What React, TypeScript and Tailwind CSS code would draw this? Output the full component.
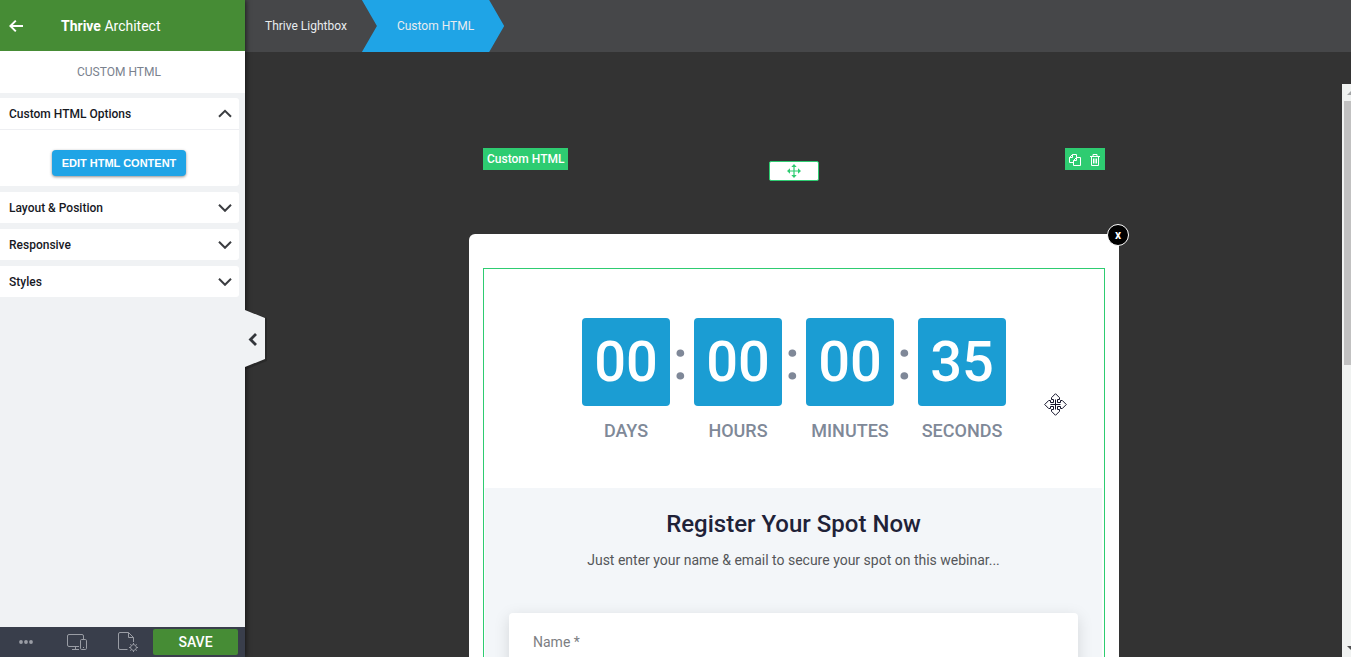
import { Fragment } from "react";

const countdown = [
  { label: "DAYS", value: "00" },
  { label: "HOURS", value: "00" },
  { label: "MINUTES", value: "00" },
  { label: "SECONDS", value: "35" },
];

const closedPanels = ["Layout & Position", "Responsive", "Styles"];

function Chevron({ up = false }: { up?: boolean }) {
  return (
    <svg width="14" height="9" viewBox="0 0 14 9" fill="none" stroke="#3b3d41" strokeWidth="2" aria-hidden="true">
      <path d={up ? "M1 7.8 L7 1.8 L13 7.8" : "M1 1.8 L7 7.8 L13 1.8"} />
    </svg>
  );
}

function PanelHeader({ title, open = false }: { title: string; open?: boolean }) {
  return (
    <button
      type="button"
      aria-expanded={open}
      className="flex h-[31px] w-full items-center justify-between pr-[7px] pl-[9px] text-left text-[12px] leading-4 font-medium text-[#17191f]"
    >
      {title}
      <Chevron up={open} />
    </button>
  );
}

function Sidebar() {
  return (
    <aside className="relative z-10 flex w-[245px] shrink-0 flex-col bg-[#f0f2f4] shadow-[1px_0_5px_rgba(0,0,0,0.6)]">
      <header className="flex h-[51px] shrink-0 items-center bg-[#468c35] px-[9px] text-white">
        <button type="button" aria-label="Back" className="w-[52px]">
          <svg width="14" height="14" viewBox="0 0 14 14" fill="none" stroke="currentColor" strokeWidth="2" aria-hidden="true">
            <path d="M14 7 H1.6 M6.8 1.6 L1.4 7 L6.8 12.4" />
          </svg>
        </button>
        <h1 className="text-[14px] leading-5">
          <b className="font-bold">Thrive</b> Architect
        </h1>
      </header>

      <h2 className="flex h-[42px] shrink-0 items-center justify-center bg-white pr-[7px] text-[12px] leading-4 text-[#7a828e]">
        CUSTOM HTML
      </h2>

      <div className="flex grow flex-col gap-[6px] pt-[5px] pr-[6px]">
        <section className="rounded-r-[3px] bg-white">
          <div className="border-b border-[#eeeff2]">
            <PanelHeader title="Custom HTML Options" open />
          </div>
          <div className="flex h-14 justify-center pt-5 pr-px">
            <button
              type="button"
              className="h-[26px] w-[134px] rounded-[4px] bg-[#1fa4e6] font-['Liberation_Sans',sans-serif] text-[11px] leading-4 font-bold whitespace-nowrap text-white shadow-[0_1px_3px_rgba(0,0,0,0.45)]"
            >
              EDIT HTML CONTENT
            </button>
          </div>
        </section>
        {closedPanels.map((title) => (
          <section key={title} className="rounded-r-[3px] bg-white">
            <PanelHeader title={title} />
          </section>
        ))}
      </div>

      <footer className="flex h-[30px] shrink-0 items-center bg-[#393e4b] text-[#9a9da5]">
        <button type="button" aria-label="More" className="flex w-[51px] justify-center">
          <svg width="14" height="4" viewBox="0 0 14 4" fill="currentColor" aria-hidden="true">
            <circle cx="2" cy="2" r="1.9" />
            <circle cx="7" cy="2" r="1.9" />
            <circle cx="12" cy="2" r="1.9" />
          </svg>
        </button>
        <button type="button" aria-label="Device preview" className="flex w-[51px] justify-center">
          <svg width="20" height="17" viewBox="0 0 20 17" fill="none" stroke="currentColor" aria-hidden="true">
            <path d="M12 12.5 H2 A1.5 1.5 0 0 1 .5 11 V2 A1.5 1.5 0 0 1 2 .5 H15 A1.5 1.5 0 0 1 16.500 2 V5 M8.500 12.500 V15.500 M5 15.500 H12" />
            <rect x="13.500" y="5.500" width="6" height="10" rx="1.200" />
            <path d="M16 13.500 H17" />
          </svg>
        </button>
        <button type="button" aria-label="Page settings" className="flex w-[51px] justify-center">
          <svg width="20" height="20" viewBox="0 0 20 20" fill="none" stroke="currentColor" aria-hidden="true">
            <path d="M9.500 17.500 H2 A1.500 1.500 0 0 1 .5 16 V2 A1.500 1.500 0 0 1 2 .5 H10.500 L15.500 5.500 V10 M10.500 .5 V5.500 H15.500" />
            <circle cx="15.500" cy="15.500" r="2.900" />
            <path d="M15.500 11 V12.500 M15.500 18.500 V20 M11 15.500 H12.500 M18.500 15.500 H20 M12.300 12.300 L13.400 13.400 M17.600 17.600 L18.700 18.700 M12.300 18.700 L13.400 17.600 M17.600 13.400 L18.700 12.300" />
          </svg>
        </button>
        <button type="button" className="h-[26px] w-[85px] rounded-[2px] bg-[#468c35] pb-px text-[14px] leading-5 font-medium text-white">
          SAVE
        </button>
      </footer>

      <button type="button" aria-label="Collapse sidebar" className="absolute top-[310px] left-full">
        <svg width="24" height="60" viewBox="0 0 24 60" aria-hidden="true">
          <path d="M0 0 L22 8 V51 L0 60 Z" fill="#000" opacity=".18" />
          <path d="M0 0 L20 8 V49 L0 57 Z" fill="#f0f2f4" />
          <path d="M11 24 L5.500 29.500 L11 35" fill="none" stroke="#33363b" strokeWidth="2.800" />
        </svg>
      </button>
    </aside>
  );
}

function Breadcrumbs() {
  return (
    <nav aria-label="Breadcrumb" className="flex h-[52px] shrink-0 bg-[#464749] text-[12px] leading-4 text-[#e8ecef]">
      <a href="#lightbox" className="flex items-center pr-[15px] pl-5">
        Thrive Lightbox
      </a>
      <a
        href="#custom-html"
        className="flex items-center bg-[#1fa4e6] pr-[30px] pl-[35px] [clip-path:polygon(0_0,calc(100%-15px)_0,100%_50%,calc(100%-15px)_100%,0_100%,15px_50%)]"
      >
        Custom HTML
      </a>
    </nav>
  );
}

function ElementToolbar() {
  return (
    <div className="flex h-[33px] shrink-0 justify-between px-[14px]">
      <div className="flex flex-1 items-start">
        <span className="flex h-[22px] items-center bg-[#2ecc71] px-1 text-[12px] leading-4 font-medium text-white">
          Custom HTML
        </span>
      </div>
      <button
        type="button"
        aria-label="Move element"
        className="flex h-5 w-[50px] items-center justify-center self-end rounded-[2px] border border-[#2ecc71] bg-white"
      >
        <svg width="14" height="14" viewBox="0 0 14 14" fill="#2ecc71" aria-hidden="true">
          <path d="M6.400 2.500 V11.500 H7.600 V2.500 Z M2.500 6.400 V7.600 H11.500 V6.400 Z" />
          <path d="M7 0 L9.700 3 H4.300 Z M7 14 L9.700 11 H4.300 Z M0 7 L3 4.300 V9.700 Z M14 7 L11 4.300 V9.700 Z" />
        </svg>
      </button>
      <div className="flex flex-1 items-start justify-end">
        <div className="flex h-[22px] w-10 items-center justify-center gap-2 bg-[#2ecc71] pt-[2px] text-white">
          <button type="button" aria-label="Duplicate">
            <svg width="12" height="12" viewBox="0 0 12 12" fill="none" stroke="currentColor" aria-hidden="true">
              <path d="M4.500 8.500 H.5 V3.500 L3.500 .5 H7.500 V3 M3.500 .5 V3.500 H.5" />
              <path d="M4.500 11.500 V6.500 L7.500 3.500 H11.500 V11.500 Z M7.500 3.500 V6.500 H4.500" />
            </svg>
          </button>
          <button type="button" aria-label="Delete">
            <svg width="12" height="12" viewBox="0 0 12 12" fill="none" stroke="currentColor" aria-hidden="true">
              <path d="M1 2.500 H11 M4 2.500 V.5 H8 V2.500 M2.500 2.500 V11.500 H9.500 V2.500 M4.500 4.500 V9.500 M6 4.500 V9.500 M7.500 4.500 V9.500" />
            </svg>
          </button>
        </div>
      </div>
    </div>
  );
}

function MoveCursor() {
  return (
    <svg width="23" height="23" viewBox="0 0 23 23" fill="#fff" stroke="#14142a" aria-hidden="true" className="absolute top-[124px] right-[37px]">
      <path d="M11.500 .7 L15.500 4.700 V6.500 H13.500 V9.500 H16.500 V7.500 H18.300 L22.300 11.500 L18.300 15.500 H16.500 V13.500 H13.500 V16.500 H15.500 V18.300 L11.500 22.300 L7.500 18.300 V16.500 H9.500 V13.500 H6.500 V15.500 H4.700 L.7 11.500 L4.700 7.500 H6.500 V9.500 H9.500 V6.500 H7.500 V4.700 Z" />
      <path d="M11.500 6.500 V16.500 M6.500 11.500 H16.500" />
    </svg>
  );
}

function Countdown() {
  return (
    <div className="relative flex h-[219px] justify-center pt-[49px]">
      {countdown.map(({ label, value }, i) => (
        <Fragment key={label}>
          {i > 0 && (
            <div className="flex h-[88px] w-6 items-center justify-center pr-[3px] pb-1 text-[56px] leading-[60px] font-medium text-[#7f8898]">:</div>
          )}
          <div className="flex w-[88px] flex-col items-center">
            <div className="flex h-[88px] w-full items-center justify-center rounded-[4px] bg-[#1b9dd3] text-[56px] leading-[60px] font-medium text-white">
              {value}
            </div>
            <div className="mt-[13px] text-[18px] leading-6 font-medium text-[#7f8998]">{label}</div>
          </div>
        </Fragment>
      ))}
      <MoveCursor />
    </div>
  );
}

function Lightbox() {
  return (
    <div className="relative mt-[53px] grow rounded-t-[6px] bg-white px-[14px] pt-[34px]">
      <button
        type="button"
        aria-label="Close"
        className="absolute -top-[10px] -right-[10px] flex size-[22px] items-center justify-center rounded-full border border-white bg-black pb-px text-[12px] leading-4 font-bold text-white"
      >
        x
      </button>
      <div className="border border-[#2ecc71]">
        <Countdown />
        <form className="mr-[2px] ml-px bg-[#f3f6f9] px-6 pt-5 pb-10 text-center">
          <h3 className="text-[24px] leading-8 font-medium text-[#1f2238]">Register Your Spot Now</h3>
          <p className="mt-2 text-[14px] leading-6 text-[#555659]">
            Just enter your name &amp; email to secure your spot on this webinar...
          </p>
          <input
            type="text"
            aria-label="Name"
            placeholder="Name *"
            className="mt-[41px] h-[58px] w-full rounded-[4px] bg-white px-6 text-[14px] leading-5 shadow-[0_4px_16px_rgba(0,0,0,0.13)] outline-none placeholder:text-[#7c7e82]"
          />
        </form>
      </div>
    </div>
  );
}

function CanvasScrollbar() {
  return (
    <div aria-hidden="true" className="mt-8 flex w-[9px] shrink-0 flex-col overflow-hidden bg-[#f0f2f1] pl-[2px]">
      <svg width="7" height="17" viewBox="0 0 7 17" fill="#a3a5a7">
        <path d="M3 11 L7 7 V11 Z" />
      </svg>
      <div className="h-[264px] bg-[#c1c1c1]" />
      <svg width="7" height="17" viewBox="0 0 7 17" fill="#505052" className="mt-auto">
        <path d="M3 6 L7 10 V6 Z" />
      </svg>
    </div>
  );
}

export default function App() {
  return (
    <div className="flex h-screen overflow-hidden bg-[#333333] font-[Roboto,sans-serif]">
      <Sidebar />
      <div className="flex min-w-0 grow flex-col">
        <Breadcrumbs />
        <div className="flex min-h-0 grow">
          <main className="flex min-w-0 grow justify-center overflow-hidden pt-24 pl-px">
            <div className="flex w-full max-w-[650px] flex-col">
              <ElementToolbar />
              <Lightbox />
            </div>
          </main>
          <CanvasScrollbar />
        </div>
      </div>
    </div>
  );
}
